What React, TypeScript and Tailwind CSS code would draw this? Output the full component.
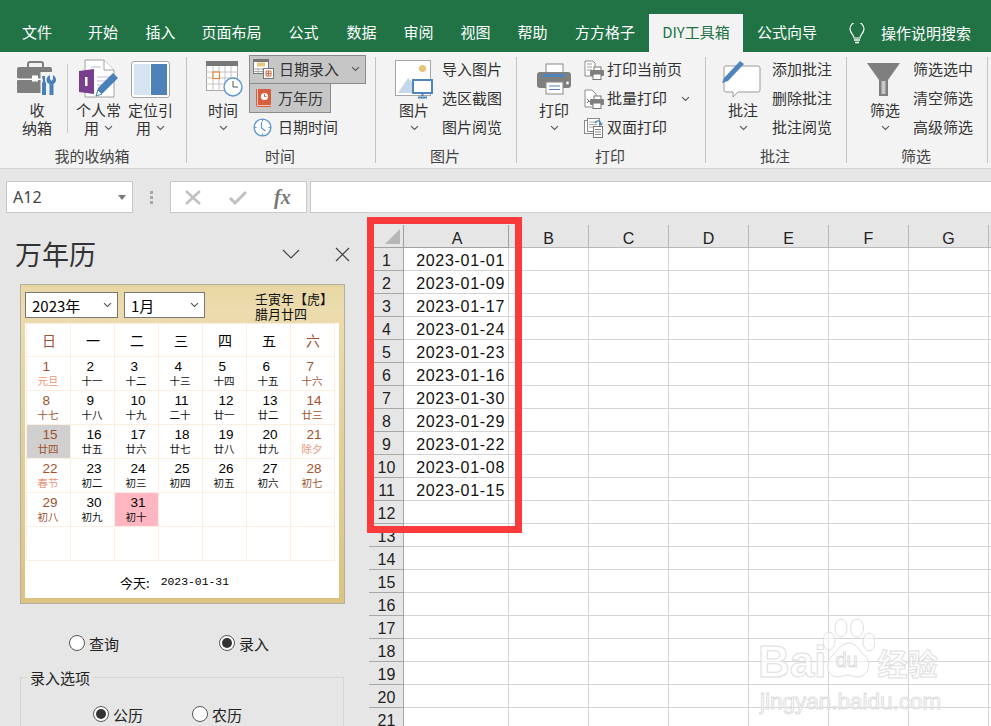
import type { ReactNode } from "react";

const TABS: [string, string][] = [
  ["文件", "w-[74px]"],
  ["开始", "w-[58px]"],
  ["插入", "w-[57px]"],
  ["页面布局", "w-[85px]"],
  ["公式", "w-[59px]"],
  ["数据", "w-[57px]"],
  ["审阅", "w-[57px]"],
  ["视图", "w-[57px]"],
  ["帮助", "w-[57px]"],
  ["方方格子", "w-[88px]"],
];

const DATES = [
  "2023-01-01", "2023-01-09", "2023-01-17", "2023-01-24", "2023-01-23", "2023-01-16",
  "2023-01-30", "2023-01-29", "2023-01-22", "2023-01-08", "2023-01-15",
];

const LUNAR = [
  "元旦", "十一", "十二", "十三", "十四", "十五", "十六",
  "十七", "十八", "十九", "二十", "廿一", "廿二", "廿三",
  "廿四", "廿五", "廿六", "廿七", "廿八", "廿九", "除夕",
  "春节", "初二", "初三", "初四", "初五", "初六", "初七",
  "初八", "初九", "初十",
];

function Chev({ className = "" }: { className?: string }) {
  return (
    <svg width="9" height="6" viewBox="0 0 9 6" className={className}>
      <path d="M1 1.2 4.5 4.5 8 1.2" fill="none" stroke="#555" strokeWidth="1.1" />
    </svg>
  );
}

function Group({ w, label, children }: { w: string; label: string; children: ReactNode }) {
  return (
    <div className={`${w} mt-[5px] h-[106px] shrink-0 border-r border-[#c4c4c4] flex flex-col`}>
      <div className="flex h-[90px]">{children}</div>
      <div className="text-center pr-[2px] leading-[18px] text-[#444] h-[16px]">{label}</div>
    </div>
  );
}

function BigBtn({ cls, icon, l1, l2 }: { cls: string; icon: ReactNode; l1: string; l2: ReactNode }) {
  return (
    <div className={`${cls} shrink-0 flex flex-col items-center`}>
      <div className="h-[44px] flex items-center justify-center">{icon}</div>
      <div className="leading-[18px] whitespace-nowrap text-[#333]">{l1}</div>
      <div className="leading-[18px] whitespace-nowrap flex items-center gap-[5px] text-[#333] h-[18px]">{l2}</div>
    </div>
  );
}

function SmallCol({ cls, items }: { cls: string; items: string[] }) {
  return (
    <div className={`${cls} -mt-[2px] shrink-0`}>
      {items.map((t) => (
        <div key={t} className="h-[29px] pb-[2px] flex items-center leading-none text-[#333] whitespace-nowrap">{t}</div>
      ))}
    </div>
  );
}

function BriefcaseIcon() {
  return (
    <svg width="40" height="38" viewBox="0 0 40 38">
      <path d="M11 8V4a2 2 0 0 1 2-2h11a2 2 0 0 1 2 2v4" fill="none" stroke="#7f7f7f" strokeWidth="2" />
      <rect x="0" y="7" width="35" height="12" rx="2" fill="#7f7f7f" />
      <rect x="0" y="20" width="35" height="13" rx="1" fill="#7f7f7f" />
      <rect x="0" y="18.5" width="25" height="1.5" fill="#fff" />
      <rect x="15" y="15.5" width="6" height="6" fill="#fff" />
      <rect x="23.5" y="12" width="16.5" height="26" fill="#f3f3f3" />
      <path d="M25 16h3v5l1 2v12h-4V23l1-2z" fill="#4a80b8" />
      <path d="M33 15v4l1.5 2 1.5-2v-4c2 1 3 3 3 5s-1 3-2.5 4v11h-4V24c-2-1-3-2-3-4s1-4 3.5-5z" fill="#4a80b8" />
    </svg>
  );
}

function NoteIcon() {
  return (
    <svg width="40" height="40" viewBox="0 0 40 40">
      <path d="M6 1h19l10 10v27H6z" fill="#fff" stroke="#a0a0a0" />
      <path d="M25 1v10h10" fill="#fff" stroke="#a0a0a0" />
      <path d="M18 22h14M18 26h10M18 18h14M12 8h10" stroke="#c9b6d8" />
      <path d="M0 12 15 10v25L0 33z" fill="#7a3e8f" />
      <rect x="6" y="18" width="2.5" height="9" fill="#fff" />
      <path d="M17 36l2-7 15-15 5 5-15 15z" fill="#4a80b8" />
      <path d="M17 37l2-6 4 4z" fill="#fff" stroke="#4a80b8" />
    </svg>
  );
}

function PanelIcon() {
  return (
    <svg width="39" height="37" viewBox="0 0 39 37">
      <rect x="0.5" y="0.5" width="38" height="36" rx="2.5" fill="#fff" stroke="#a6a6a6" />
      <rect x="3" y="3" width="16" height="31" fill="#d6e4f1" />
      <rect x="20" y="3" width="16" height="31" fill="#4e81b7" />
    </svg>
  );
}

function CalClockIcon() {
  return (
    <svg width="37" height="36" viewBox="0 0 37 36" className="ml-[3px]">
      <rect x="0.5" y="0.5" width="31" height="29" fill="#fff" stroke="#a6a6a6" />
      <rect x="0" y="0" width="32" height="5" fill="#777" />
      <path d="M7 5v25M13 5v25M19 5v25M25 5v25M0 11h32M0 17h32M0 23h32" stroke="#c4c4c4" />
      <rect x="7" y="11" width="6.5" height="6.5" fill="#fff" stroke="#e0873f" strokeWidth="1.2" />
      <circle cx="27" cy="26" r="9" fill="#fff" stroke="#5b94cf" strokeWidth="1.4" />
      <path d="M27 20v6h5" fill="none" stroke="#555" />
    </svg>
  );
}

function DateEntryIcon() {
  return (
    <svg width="21" height="20" viewBox="0 0 21 20">
      <rect x="0.5" y="0.5" width="15" height="14" fill="#fff" stroke="#777" />
      <rect x="1" y="1" width="14" height="2" fill="#777" />
      <rect x="4" y="3.5" width="8" height="4" fill="#e8c77d" />
      <path d="M1 10h14M1 12.5h14M5 9v5M10 9v5" stroke="#aaa" />
      <rect x="10.5" y="9.5" width="10" height="10" fill="#fff" stroke="#777" />
      <path d="M13 12h5v5h-5zM15.5 12v5M13 14.5h5" fill="none" stroke="#c9683b" />
    </svg>
  );
}

function BookIcon() {
  return (
    <svg width="17" height="19" viewBox="0 0 17 19">
      <path d="M1 0h15v18H3a2 2 0 0 1-2-2z" fill="#d65f3f" />
      <path d="M2.5 0v16.5H16" fill="none" stroke="#f4c4b4" />
      <circle cx="9.5" cy="7.5" r="3.6" fill="#fff" />
      <path d="M9.5 5.2v2.4h2" fill="none" stroke="#d65f3f" />
    </svg>
  );
}

function ClockIcon() {
  return (
    <svg width="19" height="19" viewBox="0 0 19 19">
      <circle cx="9.5" cy="9.5" r="8.4" fill="#fff" stroke="#5b94cf" strokeWidth="1.3" />
      <path d="M9.5 1.5v2M9.5 15.5v2M1.5 9.5h2M15.5 9.5h2" stroke="#5b94cf" />
      <path d="M8.5 4v6l4 3" fill="none" stroke="#5b94cf" strokeWidth="1.2" />
    </svg>
  );
}

function PictureIcon() {
  return (
    <svg width="38" height="39" viewBox="0 0 38 39">
      <rect x="0.5" y="0.5" width="35" height="35" fill="#fff" stroke="#a6a6a6" />
      <circle cx="27.5" cy="8.5" r="3.6" fill="#e8c27a" />
      <path d="M3 33 13 18l7 7 4 8z" fill="#c5d7ea" />
      <rect x="18" y="20" width="19" height="13" fill="#fff" stroke="#4f85bc" strokeWidth="2" />
      <path d="M27.5 33v3M23 37.5h9" stroke="#4f85bc" strokeWidth="2" />
    </svg>
  );
}

function PrinterIcon() {
  return (
    <svg width="35" height="32" viewBox="0 0 35 32">
      <rect x="9" y="1" width="17" height="11" fill="#fff" stroke="#8a8a8a" />
      <rect x="0" y="9" width="34" height="16" rx="3" fill="#7f7f7f" />
      <rect x="6" y="11" width="22" height="3" fill="#4f85bc" />
      <circle cx="30.5" cy="20" r="1.4" fill="#fff" />
      <rect x="9" y="19" width="17" height="12" fill="#fff" stroke="#8a8a8a" />
      <path d="M12 23h11M12 26.5h11" stroke="#4f85bc" />
    </svg>
  );
}

function MiniPrinter({ kind }: { kind: number }) {
  return (
    <svg width="20" height="20" viewBox="0 0 20 20">
      {kind === 2 ? (
        <g>
          <rect x="0.5" y="2.5" width="12" height="13" fill="#fff" stroke="#8a8a8a" />
          <rect x="3.5" y="0.5" width="12" height="13" fill="#fff" stroke="#8a8a8a" />
          <path d="M5 4h8M5 6.5h8M5 9h8" stroke="#aaa" />
          <rect x="9.5" y="8.5" width="9" height="11" fill="#fff" stroke="#777" />
          <path d="M11 11.5h6M11 14h6M11 16.5h6" stroke="#888" />
          <path d="M11 5c2-3 5-3 6 1" fill="none" stroke="#4f85bc" strokeWidth="1.4" />
          <path d="M15 5.5h4l-2 2.5z" fill="#4f85bc" />
        </g>
      ) : (
        <g>
          <path d={kind === 0 ? "M1 1h8l2 2v13H1z" : "M1 1h7l4 4v13H1z"} fill="#fff" stroke="#8a8a8a" />
          <path d="M3 4h5M3 7h5M3 10h5" stroke={kind === 0 ? "#999" : "#fff"} />
          {kind === 1 && <path d="M3 10l2 2-2 2M5 13l2-2" stroke="#777" fill="none" />}
          <rect x="10" y="7" width="7" height="4" fill="#fff" stroke="#777" />
          <rect x="6" y="10" width="14" height="6" rx="1" fill="#7f7f7f" />
          <rect x="9" y="14" width="8" height="5.5" fill="#fff" stroke="#777" />
        </g>
      )}
    </svg>
  );
}

function CommentIcon() {
  return (
    <svg width="39" height="37" viewBox="0 0 39 37" className="-ml-[3px]">
      <path d="M5 5h31a2 2 0 0 1 2 2v22a2 2 0 0 1-2 2H16l-5 5v-5H4a2 2 0 0 1-2-2V7a2 2 0 0 1 3-2z" fill="#fff" stroke="#9a9a9a" />
      <path d="M0 22l2-5L18 0l4 3L6 20z" fill="#4f85bc" />
    </svg>
  );
}

function FunnelIcon() {
  return (
    <svg width="33" height="33" viewBox="0 0 33 33" className="-ml-[4px]">
      <path d="M0 0h33L21 17v16h-9V17z" fill="#7f7f7f" />
      <rect x="14.5" y="18" width="4" height="13" fill="#c8c8c8" />
    </svg>
  );
}

function Radio({ on, label, cls }: { on?: boolean; label: string; cls: string }) {
  return (
    <div className={`${cls} flex items-center gap-[4px]`}>
      <span className="w-[16px] h-[16px] rounded-full border border-[#555] bg-white flex items-center justify-center">
        {on && <span className="w-[10px] h-[10px] rounded-full bg-[#333]" />}
      </span>
      <span className="text-[#222] leading-none">{label}</span>
    </div>
  );
}

function Select({ w, label }: { w: string; label: string }) {
  return (
    <div className={`${w} h-[26px] bg-white border border-[#777] flex items-center justify-between pl-[6px] pr-[5px] text-black`}>
      <span className="leading-none">{label}</span>
      <Chev />
    </div>
  );
}

function Calendar() {
  const cells = Array.from({ length: 42 }, (_, i) => i);
  return (
    <div className="ml-[20px] mt-[11px] w-[325px] h-[320px] border border-[#b4b0a0] bg-[linear-gradient(180deg,#e8d6a2,#ecdcae_8%,#e4d096_50%,#dcc382)] px-[4px] pt-[7px]">
      <div className="h-[31px] flex gap-[6px]">
        <Select w="w-[93px]" label="2023年" />
        <Select w="w-[81px]" label="1月" />
        <div className="ml-[44px] -mt-[1px] text-[13px] leading-[15px] text-[#111] whitespace-nowrap">
          <div>壬寅年【虎】</div>
          <div>腊月廿四</div>
        </div>
      </div>
      <div className="w-[314px] h-[275px] bg-white flex flex-col">
        <div className="grid grid-cols-[repeat(7,44px)] border-l border-[#ffeedd] ml-[0.5px]">
          {["日", "一", "二", "三", "四", "五", "六"].map((d, i) => (
            <div
              key={d}
              className={`h-[34px] pl-[2px] border-r border-b border-t border-[#ffeedd] flex items-center justify-center text-[14px] ${i === 0 || i === 6 ? "text-[#a0522d]" : "text-black"}`}
            >
              {d}
            </div>
          ))}
          {cells.map((i) => {
            const weekend = i % 7 === 0 || i % 7 === 6;
            const holiday = i === 0 || i === 20 || i === 21;
            let bg = "bg-white";
            if (i === 14) bg = "bg-[#d0d0d0]";
            if (i === 30) bg = "bg-[#ffb6c1]";
            return (
              <div key={i} className={`h-[34px] border-r border-b border-[#ffeedd] ${bg}`}>
                {i < 31 && (
                  <div className="flex flex-col">
                    <span className={`pl-[16px] pt-[3px] font-['Liberation_Sans'] text-[13.5px] leading-[14px] ${weekend ? "text-[#a0522d]" : "text-black"}`}>
                      {i + 1}
                    </span>
                    <span className={`text-center text-[10.5px] leading-[13px] ${holiday ? "text-[#e9967a]" : weekend ? "text-[#a0522d]" : "text-[#111]"}`}>
                      {LUNAR[i]}
                    </span>
                  </div>
                )}
              </div>
            );
          })}
        </div>
        <div className="flex-1 flex items-center justify-center pr-[15px] pt-[6px] text-[13px] text-black">
          今天:<span className="ml-[11px] font-['Liberation_Mono'] text-[11.4px]">2023-01-31</span>
        </div>
      </div>
    </div>
  );
}

function SidePane() {
  return (
    <div className="w-[369px] shrink-0 h-full overflow-hidden bg-[#e6e6e6]">
      <div className="h-[60px] pl-[15px] pr-[19px] pt-[22px] flex items-start justify-between">
        <div className="text-[27px] leading-[38px] text-[#333]">万年历</div>
        <div className="flex items-center gap-[35px] pt-[12px]">
          <svg width="18" height="11" viewBox="0 0 18 11"><path d="M1 1l8 8 8-8" fill="none" stroke="#444" strokeWidth="1.2" /></svg>
          <svg width="15" height="15" viewBox="0 0 15 15"><path d="M1 1l13 13M14 1 1 14" fill="none" stroke="#444" strokeWidth="1.2" /></svg>
        </div>
      </div>
      <Calendar />
      <div className="flex mt-[31px] h-[16px]">
        <Radio label="查询" cls="ml-[69px]" />
        <Radio on label="录入" cls="ml-[100px]" />
      </div>
      <div className="mt-[26px] ml-[20px] w-[324px] h-[80px] border border-[#d6d6d6] relative pt-[28px]">
        <span className="absolute left-[6px] -top-[10px] px-[3px] bg-[#e6e6e6] leading-[20px] text-[#222]">录入选项</span>
        <div className="flex h-[16px]">
          <Radio on label="公历" cls="ml-[72px]" />
          <Radio label="农历" cls="ml-[49px]" />
        </div>
      </div>
    </div>
  );
}

function Sheet() {
  const cols = ["B", "C", "D", "E", "F", "G"];
  const rows = Array.from({ length: 21 }, (_, i) => i);
  return (
    <div className="flex-1 min-w-0 h-full bg-[#e6e6e6] border-t border-[#d0d0d0] font-['Liberation_Sans'] text-[16px] text-[#222] pt-[12px] -mt-px">
      <div className="h-[23px] flex">
        <div className="w-[35px] shrink-0 border-b border-r border-[#9f9f9f] flex justify-end items-end pr-[3px] pb-[3px]">
          <svg width="15" height="15" viewBox="0 0 15 15"><path d="M15 0v15H0z" fill="#b6b6b6" /></svg>
        </div>
        <div className="w-[105px] shrink-0 pl-[2px] border-b border-r border-[#9f9f9f] text-center leading-[27px]">A</div>
        {cols.map((c) => (
          <div key={c} className="w-[80px] shrink-0 border-b border-r border-[#b8b8b8] text-center leading-[27px]">{c}</div>
        ))}
        <div className="flex-1 border-b border-[#b8b8b8]" />
      </div>
      {rows.map((r) => (
        <div key={r} className="h-[23px] flex bg-white">
          <div className="w-[35px] shrink-0 pl-px bg-[#e6e6e6] border-b border-r border-[#a8a8a8] text-center leading-[26px] text-[#222]">{r + 1}</div>
          <div className="w-[105px] shrink-0 border-b border-r border-[#d4d4d4] text-right pr-[3px] leading-[26px] tracking-[0.7px] text-[#111]">
            {r < 11 ? DATES[r] : ""}
          </div>
          {cols.map((c) => (
            <div key={c} className="w-[80px] shrink-0 border-b border-r border-[#d4d4d4]" />
          ))}
          <div className="flex-1 border-b border-[#d4d4d4]" />
        </div>
      ))}
    </div>
  );
}

function Watermark() {
  const outline = "text-white/60 [-webkit-text-stroke:1px_#dedede]";
  return (
    <div className="absolute left-[758px] top-[618px] w-[185px] h-[92px]">
      <div className="flex items-start">
        <span className={`${outline} font-['Liberation_Sans'] font-bold text-[44px] leading-[60px] mt-[14px]`}>Bai</span>
        <div className="relative w-[52px] h-[62px] -ml-[3px]">
          <svg width="52" height="62" viewBox="0 0 52 62" className="absolute inset-0">
            <g fill="#ffffff" fillOpacity="0.55" stroke="#dedede">
              <ellipse cx="6" cy="23" rx="6" ry="9" />
              <ellipse cx="18" cy="10" rx="6" ry="9" />
              <ellipse cx="34" cy="10" rx="6.5" ry="9" />
              <ellipse cx="46" cy="24" rx="6" ry="9" />
              <path d="M26 25c8 0 10 8 16 13 7 6 4 21-8 21-4 0-5-2-9-2s-6 2-10 2C4 59 2 46 8 39c6-5 9-14 18-14z" />
            </g>
          </svg>
          <span className={`${outline} absolute left-[12px] top-[31px] font-['Liberation_Sans'] text-[20px] leading-[22px]`}>du</span>
        </div>
        <span className={`${outline} font-bold text-[30px] leading-[34px] mt-[27px] ml-[2px] whitespace-nowrap`}>经验</span>
      </div>
      <div className={`${outline} ml-[2px] font-['Liberation_Sans'] text-[22.5px] leading-[20px] whitespace-nowrap`}>jingyan.baidu.com</div>
    </div>
  );
}

export default function App() {
  return (
    <div className="relative w-[991px] h-[726px] overflow-hidden bg-[#e6e6e6] text-[15px] font-['Noto_Sans_CJK_SC','Noto_Sans',sans-serif]">
      {/* Tab strip */}
      <div className="h-[52px] bg-[#217346] pt-[14px] flex text-white">
        {TABS.map(([t, w]) => (
          <div key={t} className={`${w} shrink-0 text-center leading-[36px]`}>{t}</div>
        ))}
        <div className="w-[94px] shrink-0 bg-[#f3f3f3] text-[#217346] text-center leading-[36px]">DIY工具箱</div>
        <div className="w-[88px] shrink-0 text-center leading-[36px]">公式向导</div>
        <div className="ml-[18px] mt-[9px] w-[16px] h-[21px]">
          <svg width="16" height="21" viewBox="0 0 16 21">
            <path d="M5 15c0-3-4-5-4-9a7 7 0 0 1 14 0c0 4-4 6-4 9z" fill="none" stroke="#fff" strokeWidth="1.2" />
            <path d="M5 17h6M6 19.5h4" stroke="#fff" strokeWidth="1.3" />
          </svg>
        </div>
        <div className="ml-[16px] leading-[37px] whitespace-nowrap">操作说明搜索</div>
      </div>

      {/* Ribbon */}
      <div className="h-[117px] bg-[#f3f3f3] border-b border-[#d2d2d2] flex">
        <Group w="w-[187px]" label="我的收纳箱">
          <BigBtn cls="ml-[17px] w-[40px]" icon={<BriefcaseIcon />} l1="收" l2="纳箱" />
          <div className="ml-[10px] w-px h-[69px] mt-[7px] bg-[#c8c8c8]" />
          <BigBtn cls="ml-[8px] w-[45px]" icon={<NoteIcon />} l1="个人常" l2={<>用<Chev /></>} />
          <BigBtn cls="ml-[7px] w-[45px]" icon={<PanelIcon />} l1="定位引" l2={<>用<Chev /></>} />
        </Group>

        <Group w="w-[189px]" label="时间">
          <BigBtn cls="ml-[16px] w-[40px]" icon={<CalClockIcon />} l1="时间" l2={<Chev />} />
          <div className="ml-[6px] -mt-[2px] shrink-0">
            <div className="w-[117px] h-[29px] pb-[1px] bg-[#c6c6c6] border border-[#8a8a8a] flex items-center pl-[3px] text-[#333]">
              <DateEntryIcon />
              <span className="ml-[5px] pb-[1px] leading-none">日期录入</span>
              <Chev className="ml-[12px]" />
            </div>
            <div className="w-[82px] h-[29px] bg-[#c6c6c6] border border-[#8a8a8a] border-t-0 flex items-center pl-[5px] text-[#333]">
              <BookIcon />
              <span className="ml-[6px] pb-[2px] leading-none">万年历</span>
            </div>
            <div className="h-[29px] flex items-center pl-[4px] text-[#333]">
              <ClockIcon />
              <span className="ml-[6px] pb-[2px] leading-none">日期时间</span>
            </div>
          </div>
        </Group>

        <Group w="w-[141px]" label="图片">
          <BigBtn cls="ml-[18px] w-[40px]" icon={<PictureIcon />} l1="图片" l2={<Chev />} />
          <SmallCol cls="ml-[8px]" items={["导入图片", "选区截图", "图片阅览"]} />
        </Group>

        <Group w="w-[189px]" label="打印">
          <BigBtn cls="ml-[19px] w-[36px]" icon={<PrinterIcon />} l1="打印" l2={<Chev />} />
          <div className="ml-[12px] -mt-[2px] shrink-0">
            {["打印当前页", "批量打印", "双面打印"].map((t, i) => (
              <div key={t} className="h-[29px] flex items-center gap-[3px] text-[#333]">
                <MiniPrinter kind={i} />
                <span className="pb-[2px] leading-none">{t}</span>
                {i === 1 && <Chev className="ml-[11px]" />}
              </div>
            ))}
          </div>
        </Group>

        <Group w="w-[141px]" label="批注">
          <BigBtn cls="ml-[17px] w-[40px]" icon={<CommentIcon />} l1="批注" l2={<Chev />} />
          <SmallCol cls="ml-[9px]" items={["添加批注", "删除批注", "批注阅览"]} />
        </Group>

        <Group w="w-[141px]" label="筛选">
          <BigBtn cls="ml-[20px] w-[36px]" icon={<FunnelIcon />} l1="筛选" l2={<Chev />} />
          <SmallCol cls="ml-[10px]" items={["筛选选中", "清空筛选", "高级筛选"]} />
        </Group>
      </div>

      {/* Formula bar */}
      <div className="h-[44px] pt-[12px] flex bg-[#e6e6e6]">
        <div className="ml-[6px] w-[127px] h-[32px] bg-white border border-[#c8c8c8] flex items-center justify-between pl-[6px] pr-[6px]">
          <span className="font-['Noto_Sans'] text-[16px] text-[#444] leading-none">A12</span>
          <svg width="8" height="5" viewBox="0 0 8 5"><path d="M0 0h8L4 5z" fill="#777" /></svg>
        </div>
        <div className="w-[37px] shrink-0 flex flex-col items-center justify-center gap-[2px] h-[32px]">
          <span className="w-[3px] h-[3px] bg-[#a8a8a8]" />
          <span className="w-[3px] h-[3px] bg-[#a8a8a8]" />
          <span className="w-[3px] h-[3px] bg-[#a8a8a8]" />
        </div>
        <div className="w-[137px] shrink-0 h-[32px] bg-white border border-[#c8c8c8] flex items-center pl-[14px]">
          <svg width="17" height="15" viewBox="0 0 17 15"><path d="M1 1l14 13M15 1 1 14" fill="none" stroke="#c0c0c0" strokeWidth="2.4" /></svg>
          <svg width="18" height="15" viewBox="0 0 18 15" className="ml-[27px]"><path d="M1 8l5 5L17 2" fill="none" stroke="#c0c0c0" strokeWidth="3" /></svg>
          <span className="ml-[27px] font-['Liberation_Serif'] italic font-bold text-[20px] text-[#777] leading-none">fx</span>
        </div>
        <div className="ml-[3px] flex-1 h-[32px] bg-white border-y border-l border-[#c8c8c8]" />
      </div>

      {/* Pane and sheet */}
      <div className="h-[513px] flex">
        <SidePane />
        <Sheet />
      </div>

      {/* Red annotation frame */}
      <div className="absolute left-[367px] top-[217px] w-[155px] h-[316px] border-[7px] border-[#fb3a3c]" />
      <Watermark />
    </div>
  );
}
